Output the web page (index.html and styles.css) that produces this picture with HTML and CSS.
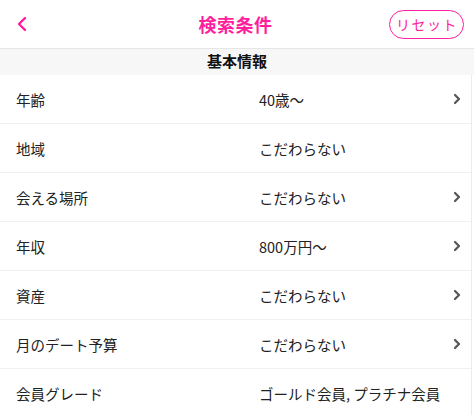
FILE: index.html
```html
<!DOCTYPE html>
<html lang="ja">
<head>
  <meta charset="UTF-8" />
  <meta name="viewport" content="width=device-width, initial-scale=1.0" />
  <title>検索条件</title>
  <link rel="stylesheet" href="styles.css">
</head>
<body>
  <header class="topbar">
    <button class="back" aria-label="戻る">
      <svg width="12" height="16" viewBox="0 0 12 16"><path d="M9 2 L3 8 L9 14" fill="none" stroke="#ff1e9b" stroke-width="2.4" stroke-linecap="round" stroke-linejoin="round"/></svg>
    </button>
    <h1 class="title">検索条件</h1>
    <button class="reset">リセット</button>
  </header>

  <div class="section-head">基本情報</div>

  <ul class="list" id="conditions"></ul>

  <script>
    const conditions = [
      { label: '年齢', value: '40歳〜', link: true },
      { label: '地域', value: 'こだわらない', link: false },
      { label: '会える場所', value: 'こだわらない', link: true },
      { label: '年収', value: '800万円〜', link: true },
      { label: '資産', value: 'こだわらない', link: true },
      { label: '月のデート予算', value: 'こだわらない', link: true },
      { label: '会員グレード', value: 'ゴールド会員, プラチナ会員', link: false }
    ];

    const chevron = '<svg width="8" height="12" viewBox="0 0 8 12"><path d="M2 2 L6 6 L2 10" fill="none" stroke="#555" stroke-width="2.2" stroke-linecap="round" stroke-linejoin="round"/></svg>';

    const list = document.getElementById('conditions');
    conditions.forEach((item) => {
      const li = document.createElement('li');
      li.className = 'row';
      li.innerHTML = `<span class="label">${item.label}</span><span class="value">${item.value}</span><span class="arrow">${item.link ? chevron : ''}</span>`;
      list.appendChild(li);
    });
  </script>
</body>
</html>
```

FILE: styles.css
```css
body {
  font-family: "Noto Sans CJK JP", "Noto Sans", sans-serif;
  background-color: #fff;
  color: #222;
  margin: 0;
}
.topbar {
  height: 48px;
  display: flex;
  align-items: center;
  justify-content: space-between;
  padding: 0 10px 0 10px;
  border-bottom: 1px solid #e6e6e6;
}
.back {
  width: 24px;
  height: 24px;
  padding: 0;
  border: none;
  background: none;
  display: flex;
  align-items: center;
  justify-content: center;
}
.title {
  margin: 0 0 0 48px;
  font-size: 18px;
  font-weight: bold;
  color: #ff1e9b;
  letter-spacing: 0.5px;
}
.reset {
  height: 29px;
  padding: 0 5px 0 6px;
  border: 1.5px solid #ff1e9b;
  border-radius: 15px;
  background: #fff;
  color: #ff1e9b;
  font-family: inherit;
  font-size: 14px;
  letter-spacing: 1.5px;
}
.section-head {
  height: 26px;
  line-height: 24px;
  background-color: #f7f7f7;
  text-align: center;
  font-size: 15px;
  font-weight: bold;
  color: #111;
}
.list {
  list-style: none;
  margin: 0;
  padding: 0;
  border-right: 1px solid #ececec;
  margin-right: 2px;
}
.row {
  height: 48px;
  display: grid;
  grid-template-columns: 243px 1fr 14px;
  align-items: center;
  padding: 0 10px 0 16px;
  border-bottom: 1px solid #f0f0f0;
  font-size: 14.5px;
}
.arrow {
  display: flex;
  align-items: center;
  justify-content: flex-end;
}
```
